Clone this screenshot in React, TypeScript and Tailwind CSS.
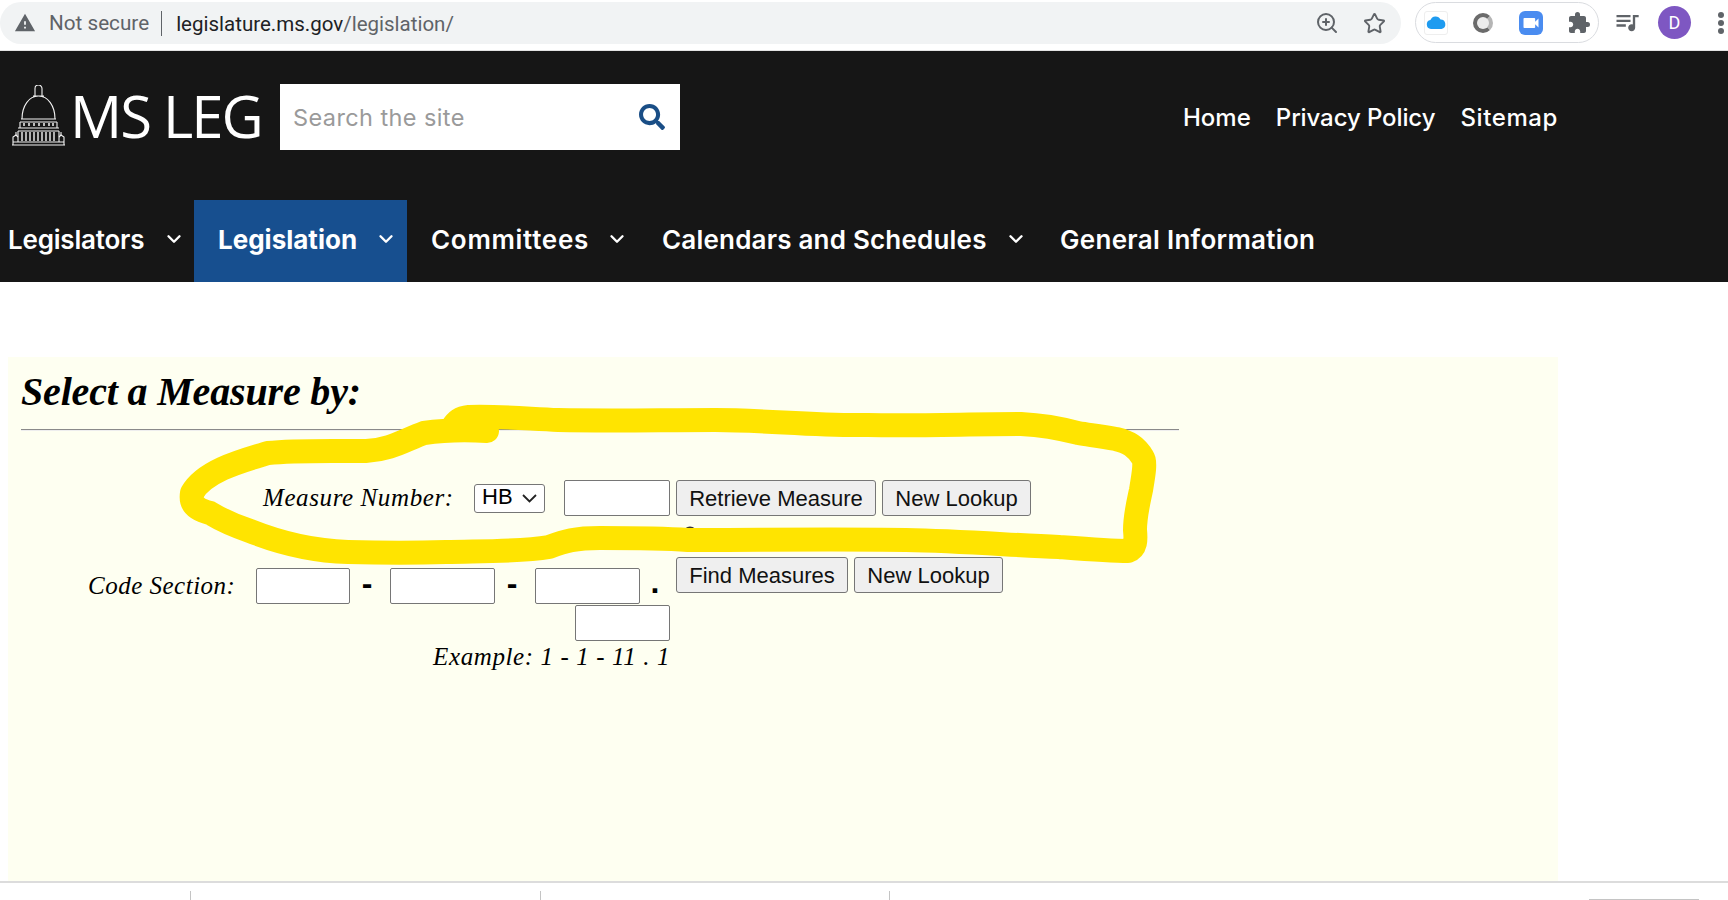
import React from "react";
import { ChevronDown, Star, ZoomIn } from "lucide-react";
import { FaSearch } from "react-icons/fa";
import { MdExtension, MdQueueMusic, MdVideocam, MdWarning } from "react-icons/md";

function Capitol() {
  return (
    <svg width="53" height="62" viewBox="0 0 53 62" fill="none" stroke="#f2f2f2" strokeWidth="1.1" className="shrink-0">
      <path d="M23 11V3.5a3.5 3.5 0 0 1 7 0V11" />
      <path d="M21 11h11M10 34c0-13 7-23 16.500-23S43 21 43 34" />
      <path d="M9 34h35M8 37h37M8 37v6M45 37v6" />
      <path d="M12 38v3M17 38v3M22 38v3M27 38v3M32 38v3M37 38v3M41 38v3" strokeWidth="1.5" />
      <path d="M6 43h41M6 46h41M6 46v11M47 46v11" />
      <path d="M10 47v9M14 47v9M18 47v9M22 47v9M26 47v9M30 47v9M34 47v9M38 47v9M42 47v9" strokeWidth="1.4" />
      <path d="M1 57v-5l3-2 2 2M52 57v-5l-3-2-2 2M1 57h51M0 60h53M1 57v3M52 57v3" />
      <path d="M4 47v3M49 47v3" />
    </svg>
  );
}

function NavItem({ label, active, chevron = true, className }: { label: string; active?: boolean; chevron?: boolean; className: string }) {
  return (
    <div className={`flex h-full items-center pb-[4px] ${className} ${active ? "bg-[#174f8f] font-bold" : "font-semibold"}`}>
      <span className="whitespace-nowrap">{label}</span>
      {chevron && <ChevronDown className="ml-auto text-white" size={22} strokeWidth={2.6} />}
    </div>
  );
}

const Field = ({ w }: { w: string }) => (
  <input className={`h-[36px] shrink-0 rounded-[2px] border border-[#767676] bg-white ${w}`} />
);

const Btn = ({ label, w }: { label: string; w: string }) => (
  <button className={`h-[36px] shrink-0 rounded-[3px] border border-[#767676] bg-[#efefef] text-[22px] text-[#111] ${w}`}>{label}</button>
);

export default function App() {
  return (
    <div className="relative h-[900px] w-[1728px] overflow-hidden bg-white">
      {/* Browser bar */}
      <div className="flex h-[51px] items-start border-b border-[#e3e3e3] bg-white pt-[2px] font-['Roboto',sans-serif]">
        <div className="flex h-[42px] w-[1401px] items-center rounded-r-[21px] rounded-l-[21px] bg-[#f1f3f4]">
          <MdWarning className="ml-[14px] text-[#5f6368]" size={22} />
          <span className="mt-[2px] ml-[13px] text-[20.700px] text-[#5f6368]">Not secure</span>
          <span className="ml-[12px] h-[25px] w-px bg-[#5f6368]" />
          <span className="mt-[2px] ml-[14px] text-[20.500px] text-[#202124]">
            legislature.ms.gov<span className="text-[#5f6368]">/legislation/</span>
          </span>
          <ZoomIn className="ml-auto text-[#5f6368]" size={24} strokeWidth={2} />
          <Star className="mr-[15px] ml-[24px] text-[#5f6368]" size={23} strokeWidth={2} />
        </div>
        <div className="ml-[14px] flex h-[41px] w-[184px] items-center rounded-[21px] border border-[#dadce0]">
          <div className="ml-[8px] flex h-[24px] w-[24px] items-center justify-center rounded-[3px] border border-[#eeeeee]">
            <svg width="20" height="13" viewBox="0 0 20 13">
              <path d="M5 13a4.500 4.500 0 0 1-.6-8.900A5.500 5.500 0 0 1 14.500 3.500 4.800 4.800 0 0 1 15.500 13z" fill="#1e9bf0" />
            </svg>
          </div>
          <div className="ml-[25px] h-[20px] w-[20px] rounded-full border-[4px] border-[#6b6b6b] border-r-[#b5b5b5] bg-[#ececec]" />
          <div className="ml-[26px] flex h-[24px] w-[24px] items-center justify-center rounded-[6px] bg-[#4a8cf0]">
            <MdVideocam className="text-white" size={20} />
          </div>
          <MdExtension className="ml-[24px] text-[#5f6368]" size={24} />
        </div>
        <MdQueueMusic className="mt-[6px] ml-[14px] text-[#5f6368]" size={28} />
        <div className="mt-[4px] ml-[17px] flex h-[33px] w-[33px] items-center justify-center rounded-full bg-[#7e57c2] text-[18px] text-white">D</div>
        <div className="mt-[10px] ml-[27px] flex flex-col gap-[2px]">
          <span className="h-[6px] w-[6px] rounded-full bg-[#5f6368]" />
          <span className="h-[6px] w-[6px] rounded-full bg-[#5f6368]" />
          <span className="h-[6px] w-[6px] rounded-full bg-[#5f6368]" />
        </div>
      </div>

      {/* Dark header */}
      <div className="bg-[#161616] text-white">
        <div className="flex h-[149px] items-start pt-[33px] font-['Inter',sans-serif]">
          <div className="mt-[1px] ml-[12px]"><Capitol /></div>
          <span className="mt-[-3px] ml-[5px] w-[210px] font-['Open_Sans',sans-serif] text-[58px] leading-[70px] tracking-[-2px] whitespace-nowrap text-white">MS LEG</span>
          <div className="flex h-[66px] w-[400px] items-center bg-white pr-[15px] pl-[13px]">
            <span className="mt-[1px] text-[23.500px] tracking-[0.4px] text-[#9a9a9a]">Search the site</span>
            <FaSearch className="ml-auto text-[#1a4e86]" size={26} />
          </div>
          <div className="mt-[1px] mr-[170px] ml-auto flex h-[66px] w-[375px] items-center justify-between text-[24px] font-medium text-white">
            <span>Home</span>
            <span className="tracking-[-0.1px]">Privacy Policy</span>
            <span className="tracking-[0.6px]">Sitemap</span>
          </div>
        </div>
        <div className="flex h-[82px] items-center font-['Inter',sans-serif] text-[26px] text-white">
          <NavItem label="Legislators" className="w-[194px] pr-[9px] pl-[8px] tracking-[-0.2px]" />
          <NavItem label="Legislation" active className="w-[213px] pr-[10px] pl-[24px]" />
          <NavItem label="Committees" className="ml-[24px] w-[231px] pr-[34px] tracking-[0.7px]" />
          <NavItem label="Calendars and Schedules" className="w-[398px] pr-[33px] tracking-[0.2px]" />
          <NavItem label="General Information" chevron={false} className="tracking-[0.3px]" />
        </div>
      </div>

      {/* Form panel */}
      <div className="mt-[75px] ml-[8px] h-[524px] w-[1550px] bg-[#fefff1] pt-[11px] font-['Liberation_Serif',serif] text-black">
        <h2 className="ml-[13px] h-[48px] text-[40px] leading-[48px] font-bold tracking-[-0.17px] italic">Select a Measure by:</h2>
        <div className="mt-[13px] ml-[13px] h-[2px] w-[1158px] border-t border-[#8a8a8a] bg-[#eeeeee]" />

        <div className="mt-[49px] ml-[255px] flex h-[36px] items-center font-['Liberation_Sans',sans-serif]">
          <span className="w-[190px] font-['Liberation_Serif',serif] text-[25px] tracking-[0.6px] whitespace-nowrap italic">Measure Number:</span>
          <div className="relative ml-[21px] h-[29px] w-[71px] shrink-0">
            <select className="h-full w-full appearance-none rounded-[3px] border border-[#767676] bg-white pb-[2px] pl-[7px] text-[22px] leading-[24px] text-black">
              <option>HB</option>
            </select>
            <svg className="pointer-events-none absolute top-[10px] right-[8px]" width="15" height="9" viewBox="0 0 15 9" fill="none" stroke="#222" strokeWidth="1.8">
              <path d="M1 1l6.500 6.500L14 1" />
            </svg>
          </div>
          <div className="ml-[19px]"><Field w="w-[106px]" /></div>
          <div className="ml-[6px]"><Btn label="Retrieve Measure" w="w-[200px]" /></div>
          <div className="ml-[6px]"><Btn label="New Lookup" w="w-[149px]" /></div>
        </div>

        <div className="mt-[41px] ml-[80px] flex items-start font-['Liberation_Sans',sans-serif]">
          <div className="flex w-[582px] flex-col items-end pt-[11px]">
            <div className="flex h-[36px] w-full items-center">
              <span className="w-[147px] font-['Liberation_Serif',serif] text-[25px] tracking-[0.5px] whitespace-nowrap italic">Code Section:</span>
              <div className="ml-[21px]"><Field w="w-[94px]" /></div>
              <span className="mb-[7px] w-[40px] pr-[6px] text-center text-[32px] leading-none font-bold">-</span>
              <Field w="w-[105px]" />
              <span className="mb-[7px] w-[40px] pr-[6px] text-center text-[32px] leading-none font-bold">-</span>
              <Field w="w-[105px]" />
              <span className="mt-[-8px] w-[30px] text-center text-[32px] leading-none font-bold">.</span>
            </div>
            <div className="mt-[1px]"><Field w="w-[95px]" /></div>
            <span className="mt-[1px] font-['Liberation_Serif',serif] text-[25px] leading-[30px] tracking-[0.6px] italic">Example: 1 - 1 - 11 . 1</span>
          </div>
          <div className="ml-[6px]"><Btn label="Find Measures" w="w-[172px]" /></div>
          <div className="ml-[6px]"><Btn label="New Lookup" w="w-[149px]" /></div>
        </div>
      </div>

      {/* Bottom strip */}
      <div className="relative h-[19px] border-t-2 border-[#dcdcdc] bg-white">
        <div className="flex h-full items-start pt-[8px]">
          <span className="ml-[190px] h-[10px] w-px bg-[#c4c4c4]" />
          <span className="ml-[349px] h-[10px] w-px bg-[#c4c4c4]" />
          <span className="ml-[348px] h-[10px] w-px bg-[#c4c4c4]" />
          <span className="mt-[8px] ml-[699px] h-px w-[110px] bg-[#c4c4c4]" />
        </div>
      </div>

      {/* Hand-drawn highlight */}
      <svg className="pointer-events-none absolute top-0 left-0" width="1728" height="900" viewBox="0 0 1728 900" fill="none">
        <path d="M686 529c2-2 6-2 8 0" stroke="#333" strokeWidth="2" />
        <path
          d="M487 431 C470 430 445 430 424 433 C405 440 390 450 366 451 C330 451 295 450 268 453 C245 460 205 470 192 493 C190 505 198 510 210 513 C225 522 235 526 250 531 C285 545 315 551 348 552 C385 553 415 553 446 552 C480 551 520 552 549 547 C565 541 575 538 600 538 C630 538 660 538 688 540 C760 540 835 539 906 540 C960 541 1010 545 1059 547 C1085 549 1110 551 1128 551 C1136 548 1136 540 1135 530 C1135 515 1139 500 1141 490 C1143 478 1146 462 1143 458 C1136 446 1128 442 1116 439 C1100 436 1090 435 1078 433 C1055 427 1040 425 1021 424 C970 424 920 426 868 425 C815 426 765 420 715 420 C660 420 610 421 558 420 C530 419 500 416 469 417 C460 418 456 421 452 428"
          stroke="#ffe400"
          strokeWidth="24"
          strokeLinecap="round"
          strokeLinejoin="round"
        />
      </svg>
    </div>
  );
}
